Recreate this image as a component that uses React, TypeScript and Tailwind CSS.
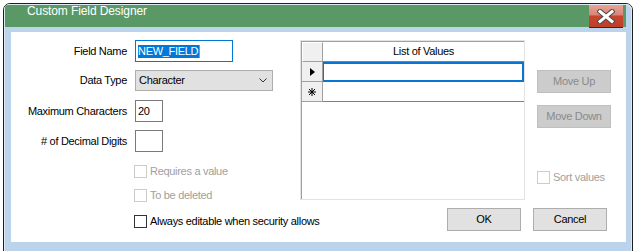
import type { ReactNode } from 'react'

function CheckBox({ label, disabled }: { label: string; disabled?: boolean }) {
  return (
    <div className="flex items-center h-[13px]">
      <span
        className={`block w-[13px] h-[13px] bg-white border ${disabled ? 'border-[#cccccc]' : 'border-[#333333]'}`}
      />
      <span className={`ml-[3px] leading-[13px] ${disabled ? 'text-[#a0a0a0]' : 'text-black'}`}>{label}</span>
    </div>
  )
}

function Button({ children, disabled }: { children: ReactNode; disabled?: boolean }) {
  return (
    <div
      className={`flex items-center justify-center w-[74px] h-[23px] border ${
        disabled ? 'bg-[#cccccc] border-[#bfbfbf] text-[#8a8a8a]' : 'bg-[#e1e1e1] border-[#adadad] text-black'
      }`}
    >
      {children}
    </div>
  )
}

function Row({ label, children, className = '' }: { label: string; children: ReactNode; className?: string }) {
  return (
    <div className={`flex items-center ${className}`}>
      <span className="w-[117px] text-right pr-px leading-[13px]">{label}</span>
      <div className="ml-[7px]">{children}</div>
    </div>
  )
}

function ValuesGrid() {
  return (
    <div className="w-[225px] h-[160px] border border-[#e3e3e3] bg-white">
      <div className="h-full border-l border-t border-[#a0a0a0] flex flex-col">
        <div className="flex h-[20px]">
          <div className="w-[21px] bg-[#f0f0f0] border-r border-b border-[#a0a0a0] border-l border-l-white border-t border-t-white" />
          <div className="w-[201px] flex items-center justify-center border-b border-[#808080] leading-[13px]">
            List of Values
          </div>
        </div>
        <div className="flex h-[20px]">
          <div className="w-[21px] flex items-center justify-center bg-[#f0f0f0] border-r border-b border-[#a0a0a0]">
            <svg width="5" height="8" viewBox="0 0 5 8">
              <path d="M0 0 L5 4 L0 8 Z" fill="#000" />
            </svg>
          </div>
          <div className="w-[201px] border-2 border-l border-[#0a74d2]" />
        </div>
        <div className="flex h-[20px]">
          <div className="w-[21px] flex items-center justify-center bg-[#f0f0f0] border-r border-b border-[#a0a0a0]">
            <svg width="8" height="8" viewBox="0 0 8 8" stroke="#000" strokeWidth="1">
              <path d="M4 0 V8 M0 4 H8 M1 1 L7 7 M7 1 L1 7" />
            </svg>
          </div>
          <div className="w-[201px] border-b border-[#808080]" />
        </div>
      </div>
    </div>
  )
}

export default function App() {
  return (
    <div className="w-[635px] h-[251px] bg-white overflow-hidden font-['Liberation_Sans',Arial,sans-serif] text-[11px] tracking-[-0.3px] text-black">
      <div className="ml-[3px] mt-[3px] w-[630px] h-[260px] rounded-t-[7px] border border-[#1e1e1e]">
        <div className="h-full rounded-t-[6px] border border-[#dfe9f4] bg-[#bcd4eb]">
          {/* title bar */}
          <div className="flex items-start h-[22px] mr-[5px] bg-[#5a9865] rounded-tl-[3px]">
            <span className="pl-[22px] text-[12px] tracking-[-0.1px] leading-[12px] text-white">
              Custom Field Designer
            </span>
            <div className="ml-auto mr-[3px] w-[34px] h-[23px] flex items-center justify-center border-b border-[#5a1a12] bg-[linear-gradient(#e7a497,#da8474_45%,#c8462f_50%,#bd3f29)]">
              <svg width="18" height="15" viewBox="0 0 18 15">
                <path d="M3 2.5 L15 12.5 M15 2.5 L3 12.5" stroke="#4a4a4a" strokeWidth="5" strokeLinecap="square" />
                <path d="M3 2.5 L15 12.5 M15 2.5 L3 12.5" stroke="#ffffff" strokeWidth="3" strokeLinecap="square" />
              </svg>
            </div>
          </div>

          {/* client area */}
          <div className="mt-[5px] ml-[6px] mr-[5px] h-[210px] bg-white pt-[8px]">
            <div className="flex h-[162px]">
              <div className="w-[289px] flex flex-col">
                <Row label="Field Name">
                  <div className="w-[98px] h-[22px] border border-[#0078d7] flex items-center pl-[2px]">
                    <span className="bg-[#0078d7] text-white leading-[13px] pr-px">NEW_FIELD</span>
                    <span className="w-px h-[13px] bg-[#d4883a]" />
                  </div>
                </Row>
                <Row label="Data Type" className="mt-[8px]">
                  <div className="w-[138px] h-[21px] bg-[#e1e1e1] border border-[#adadad] flex items-center pl-[3px] pr-[5px]">
                    <span className="flex-1 leading-[13px]">Character</span>
                    <svg width="8" height="5" viewBox="0 0 8 5">
                      <path d="M0.5 0.5 L4 4 L7.5 0.5" fill="none" stroke="#333" strokeWidth="1" />
                    </svg>
                  </div>
                </Row>
                <Row label="Maximum Characters" className="mt-[9px]">
                  <div className="w-[28px] h-[22px] border border-[#7a7a7a] flex items-center pl-[2px] leading-[13px]">
                    20
                  </div>
                </Row>
                <Row label="# of Decimal Digits" className="mt-[8px]">
                  <div className="w-[28px] h-[22px] border border-[#7a7a7a]" />
                </Row>
                <div className="mt-[13px] pl-[123px]">
                  <CheckBox label="Requires a value" disabled />
                </div>
                <div className="mt-[11px] pl-[123px]">
                  <CheckBox label="To be deleted" disabled />
                </div>
              </div>

              <ValuesGrid />

              <div className="ml-[12px] flex flex-col">
                <div className="mt-[30px]">
                  <Button disabled>Move Up</Button>
                </div>
                <div className="mt-[12px]">
                  <Button disabled>Move Down</Button>
                </div>
                <div className="mt-[43px]">
                  <CheckBox label="Sort values" disabled />
                </div>
              </div>
            </div>

            <div className="flex items-start mt-[6px]">
              <div className="w-[436px] pl-[123px] pt-[7px]">
                <CheckBox label="Always editable when security allows" />
              </div>
              <Button>OK</Button>
              <div className="ml-[12px]">
                <Button>Cancel</Button>
              </div>
            </div>
          </div>
        </div>
      </div>
    </div>
  )
}
